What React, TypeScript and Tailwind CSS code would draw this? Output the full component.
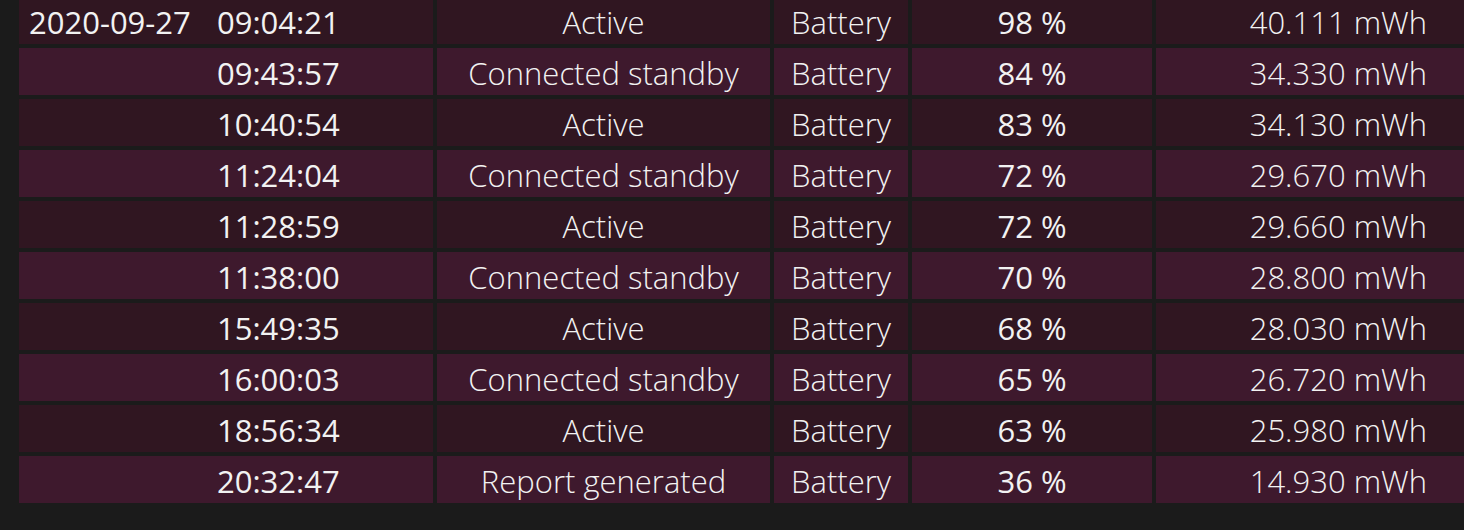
import React from 'react';

interface Row {
  date?: string;
  time: string;
  state: string;
  source: string;
  percent: string;
  capacity: string;
}

const ROWS: Row[] = [
  { date: '2020-09-27', time: '09:04:21', state: 'Active', source: 'Battery', percent: '98 %', capacity: '40.111 mWh' },
  { time: '09:43:57', state: 'Connected standby', source: 'Battery', percent: '84 %', capacity: '34.330 mWh' },
  { time: '10:40:54', state: 'Active', source: 'Battery', percent: '83 %', capacity: '34.130 mWh' },
  { time: '11:24:04', state: 'Connected standby', source: 'Battery', percent: '72 %', capacity: '29.670 mWh' },
  { time: '11:28:59', state: 'Active', source: 'Battery', percent: '72 %', capacity: '29.660 mWh' },
  { time: '11:38:00', state: 'Connected standby', source: 'Battery', percent: '70 %', capacity: '28.800 mWh' },
  { time: '15:49:35', state: 'Active', source: 'Battery', percent: '68 %', capacity: '28.030 mWh' },
  { time: '16:00:03', state: 'Connected standby', source: 'Battery', percent: '65 %', capacity: '26.720 mWh' },
  { time: '18:56:34', state: 'Active', source: 'Battery', percent: '63 %', capacity: '25.980 mWh' },
  { time: '20:32:47', state: 'Report generated', source: 'Battery', percent: '36 %', capacity: '14.930 mWh' },
];

export default function App() {
  return (
    <div
      className="w-[1464px] h-[530px] overflow-hidden bg-[#1b1b1b] text-[#f2f2f2] text-[31px] font-light leading-none pl-[19px]"
      style={{ fontFamily: '"Open Sans", "Noto Sans", sans-serif' }}
    >
      <div className="-mt-[3px] grid grid-cols-[414px_333px_134px_240px_308px] gap-1">
        {ROWS.map((row, i) => {
          // alternating row shades
          const bg = i % 2 === 0 ? 'bg-[#301621]' : 'bg-[#3e192d]';
          return (
            <React.Fragment key={i}>
              <div className={`${bg} h-[47px] flex items-center pl-[10px] pt-[4px] font-normal`}>
                <span className="inline-block w-[188px]">{row.date}</span>
                <span>{row.time}</span>
              </div>
              <div className={`${bg} h-[47px] flex items-center justify-center pt-[4px]`}>{row.state}</div>
              <div className={`${bg} h-[47px] flex items-center justify-center pt-[4px]`}>{row.source}</div>
              <div className={`${bg} h-[47px] flex items-center justify-center pt-[4px] font-normal`}>{row.percent}</div>
              <div className={`${bg} h-[47px] flex items-center justify-end pr-[37px] pt-[4px]`}>{row.capacity}</div>
            </React.Fragment>
          );
        })}
      </div>
    </div>
  );
}
